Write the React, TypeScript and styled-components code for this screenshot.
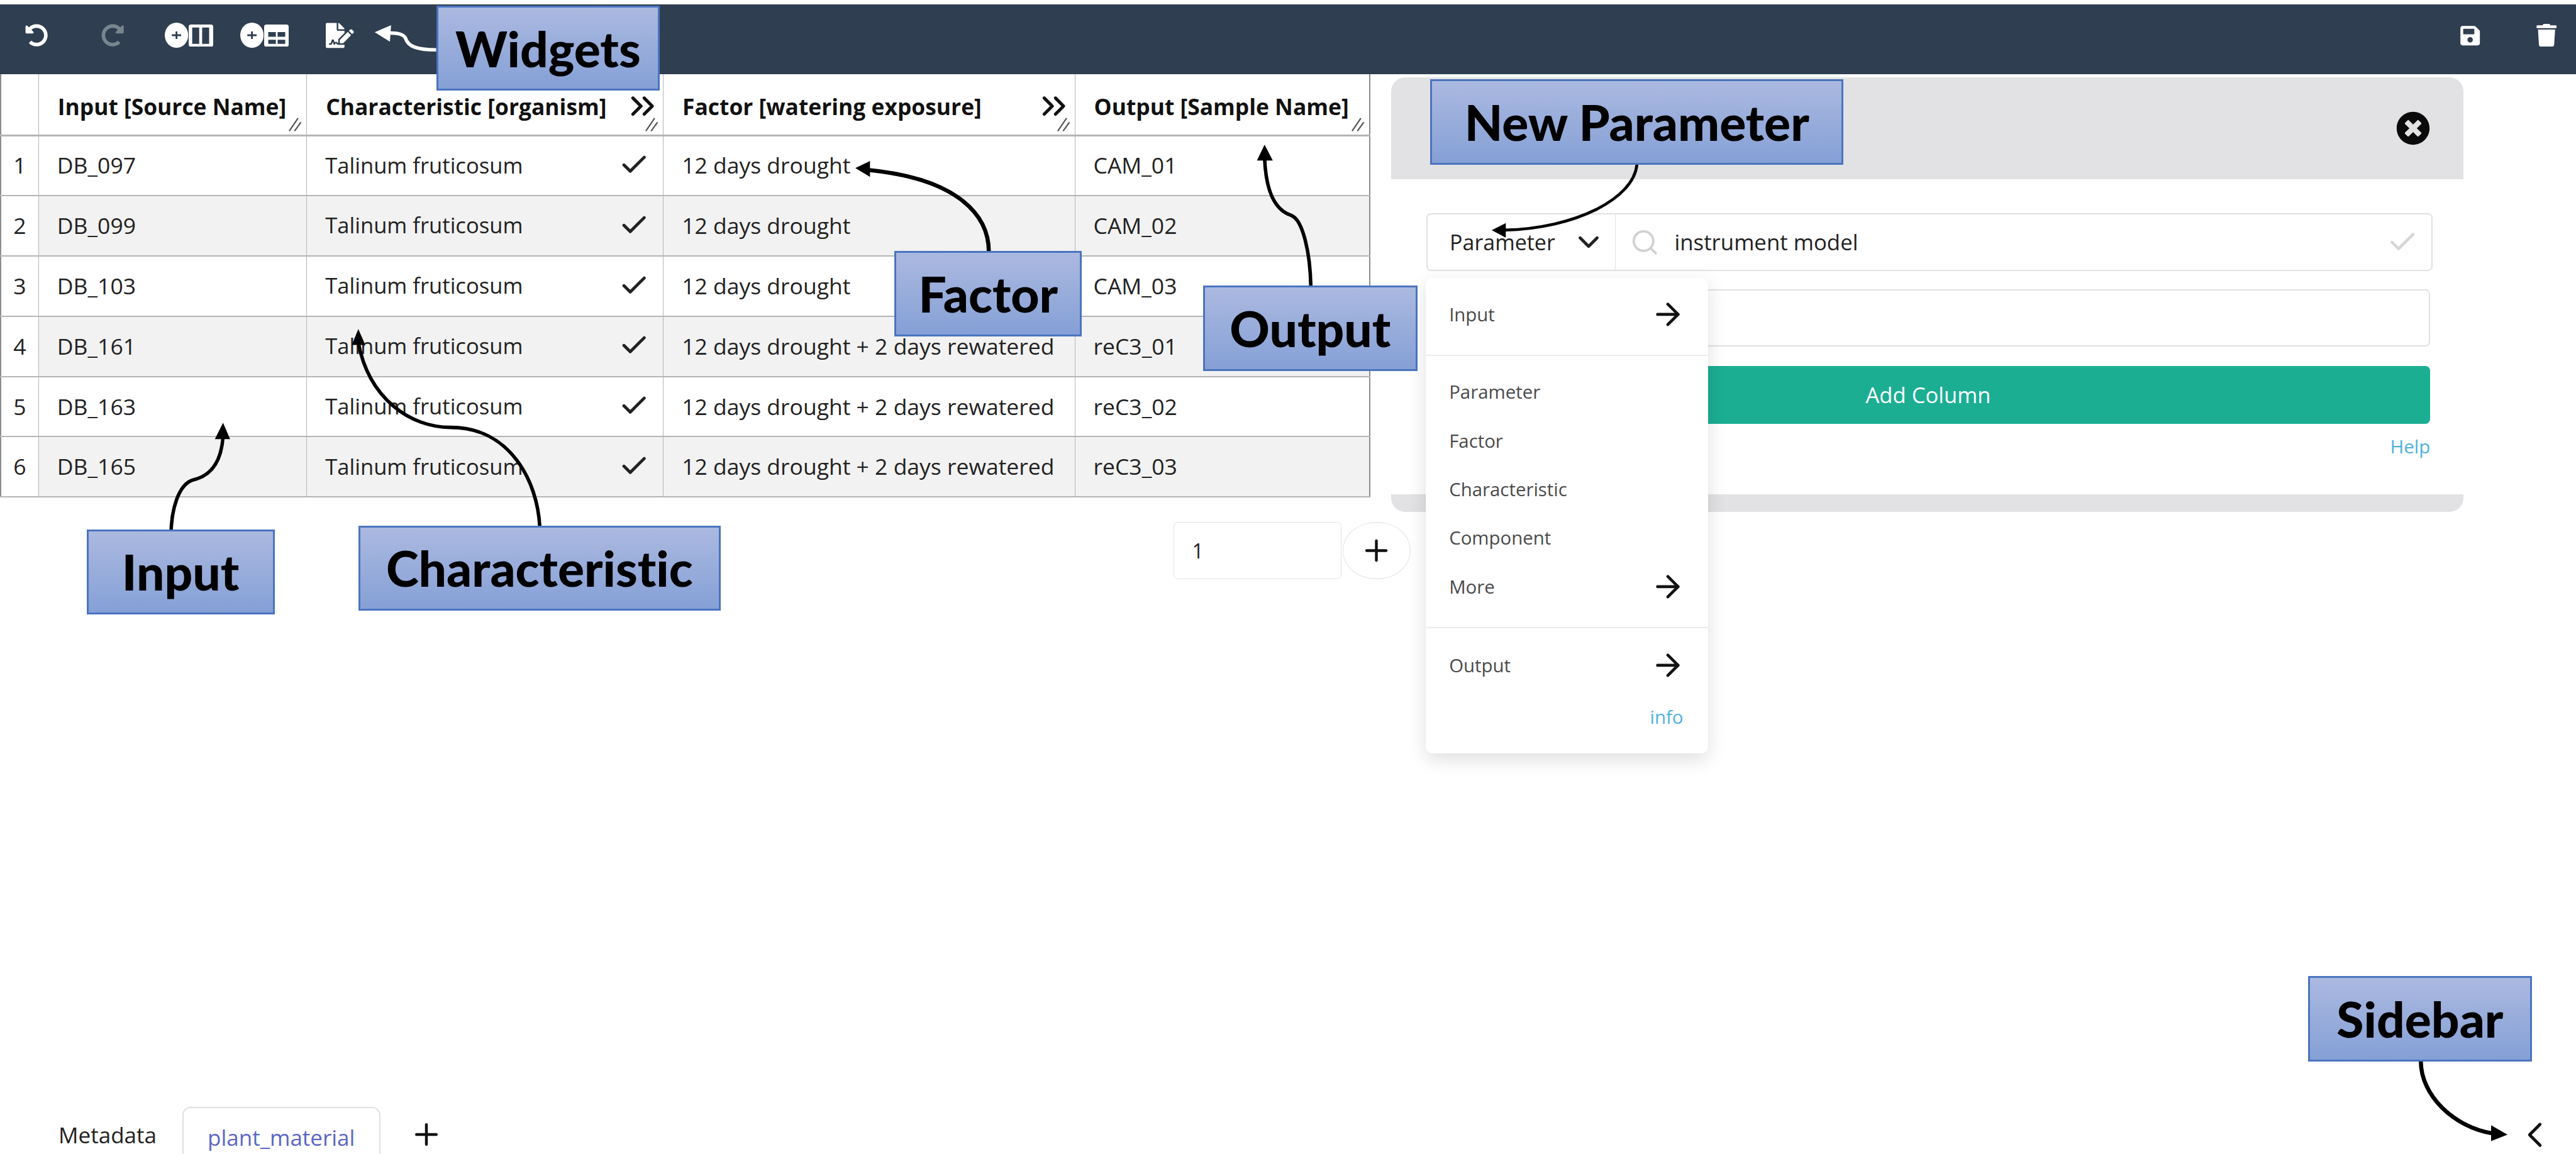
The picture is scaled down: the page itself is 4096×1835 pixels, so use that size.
import React from "react";
import styled, { createGlobalStyle } from "styled-components";
import { ArrowRight, Check, ChevronDown, ChevronLeft, ChevronsRight, Plus, Search } from "lucide-react";
import { FaFileSignature, FaRedoAlt, FaSave, FaTimesCircle, FaTrash, FaUndoAlt } from "react-icons/fa";

const K = 4096 / 4400;
const n = (v: number) => +(v * K).toFixed(2);
const u = (v: number) => `${n(v)}px`;

const Global = createGlobalStyle`
  html, body { margin: 0; padding: 0; background: #fff; overflow: hidden; }
  body { font-family: "Open Sans", "Noto Sans", sans-serif; color: #222; }
`;

const Page = styled.div`
  position: relative;
  width: 4096px;
  height: 1835px;
  padding-top: ${u(7)};
  box-sizing: border-box;
  display: flex;
  flex-direction: column;
  overflow: hidden;
`;

const Toolbar = styled.header`
  flex: none;
  height: ${u(120)};
  background: #2f3e50;
  box-sizing: border-box;
  padding: 0 ${u(31)} ${u(13)} ${u(43)};
  display: flex;
  align-items: center;
  justify-content: space-between;
  color: #fff;
`;
const ToolGroup = styled.div`
  display: flex;
  align-items: center;
`;
const ToolIcon = styled.span<{ $gap?: number; $muted?: boolean }>`
  display: inline-flex;
  align-items: center;
  gap: ${u(1)};
  margin-left: ${(p) => u(p.$gap ?? 0)};
  color: ${(p) => (p.$muted ? "#78858f" : "#fff")};
`;

const Main = styled.main`
  flex: 1;
  min-height: 0;
  display: flex;
`;
const TableColumn = styled.section`
  flex: none;
  width: ${u(2376)};
`;
const Grid = styled.table`
  width: ${u(2339)};
  table-layout: fixed;
  border-collapse: collapse;
  border: ${u(3)} solid #8d8d8d;
  border-top: 0;
  font-size: 35.5px;
`;
const HeadCell = styled.th<{ $w: number }>`
  position: relative;
  width: ${(p) => u(p.$w)};
  height: ${u(104)};
  box-sizing: border-box;
  padding: ${u(6)} 0 0 ${u(32)};
  border: ${u(2)} solid #b5b5b5;
  border-top: 0;
  border-bottom-width: ${u(4)};
  background: #fff;
  text-align: left;
  font-size: 35.4px;
  font-weight: 700;
  color: #111;
  white-space: nowrap;
`;
const Cell = styled.td<{ $shade?: boolean }>`
  position: relative;
  height: ${u(103)};
  box-sizing: border-box;
  padding: 0 0 ${u(2)} ${u(31)};
  border: ${u(2)} solid #b5b5b5;
  border-bottom-width: ${u(3)};
  background: ${(p) => (p.$shade ? "#f2f2f2" : "#fff")};
  color: #222;
  white-space: nowrap;
`;
const IndexCell = styled.td`
  height: ${u(103)};
  box-sizing: border-box;
  padding: 0 0 ${u(2)};
  border: ${u(2)} solid #b5b5b5;
  border-bottom-width: ${u(3)};
  text-align: center;
  color: #222;
`;
const CellRow = styled.div`
  display: flex;
  align-items: center;
  justify-content: space-between;
  padding-right: ${u(24)};
  font-size: 34.6px;
`;
const HeadRow = styled.div`
  display: flex;
  align-items: center;
  justify-content: space-between;
  padding-right: ${u(2)};
`;
const Grip = styled.svg`
  position: absolute;
  right: ${u(8)};
  bottom: ${u(4)};
  width: ${u(22)};
  height: ${u(24)};
`;
const AddRow = styled.div`
  display: flex;
  margin: ${u(42)} 0 0 ${u(2005)};
`;
const CountBox = styled.div`
  flex: none;
  width: ${u(286)};
  height: ${u(97)};
  box-sizing: border-box;
  padding-left: ${u(30)};
  display: flex;
  align-items: center;
  border: ${u(2)} solid #e3e3e3;
  border-radius: ${u(8)};
  font-size: 32px;
  color: #222;
`;
const RoundButton = styled.div`
  flex: none;
  width: ${u(117)};
  height: ${u(97)};
  margin-left: ${u(2)};
  box-sizing: border-box;
  display: flex;
  align-items: center;
  justify-content: center;
  border: ${u(2)} solid #e3e3e3;
  border-radius: 50%;
  background: #fff;
  color: #111;
`;

const Panel = styled.aside`
  flex: none;
  align-self: flex-start;
  width: ${u(1832)};
  margin-top: ${u(5)};
`;
const PanelHead = styled.div`
  height: ${u(174)};
  box-sizing: border-box;
  padding-right: ${u(57)};
  background: #e2e2e4;
  border-radius: ${u(24)} ${u(24)} 0 0;
  display: flex;
  align-items: center;
  justify-content: flex-end;
  color: #0a0a0a;
`;
const PanelBody = styled.div`
  padding: ${u(58)} ${u(57)} 0 ${u(60)};
  height: ${u(538)};
  box-sizing: border-box;
`;
const PanelFoot = styled.div`
  height: ${u(30)};
  background: #e2e2e4;
  border-radius: 0 0 ${u(24)} ${u(24)};
`;
const SearchRow = styled.div`
  position: relative;
  height: ${u(99)};
  margin-right: ${u(-4)};
  box-sizing: border-box;
  display: flex;
  border: ${u(3)} solid #e1e1e1;
  border-radius: ${u(8)};
  font-size: 34px;
  color: #222;
`;
const TypeSelect = styled.div`
  flex: none;
  width: ${u(322)};
  box-sizing: border-box;
  padding: 0 ${u(17)} 0 ${u(38)};
  border-right: ${u(2)} solid #e1e1e1;
  display: flex;
  align-items: center;
  justify-content: space-between;
`;
const SearchField = styled.div`
  flex: 1;
  padding: 0 ${u(22)} 0 ${u(24)};
  display: flex;
  align-items: center;
  gap: ${u(26)};
`;
const SearchText = styled.span`
  flex: 1;
  font-size: 34.8px;
`;
const TextBox = styled.div`
  height: ${u(98)};
  margin-top: ${u(31)};
  box-sizing: border-box;
  border: ${u(3)} solid #e1e1e1;
  border-radius: ${u(8)};
`;
const AddButton = styled.div`
  height: ${u(99)};
  margin-top: ${u(33)};
  display: flex;
  align-items: center;
  justify-content: center;
  background: #1bae93;
  border-radius: ${u(8)};
  color: #fff;
  font-size: 34.6px;
`;
const HelpLink = styled.div`
  margin-top: ${u(16)};
  text-align: right;
  font-size: 29.5px;
  color: #4fb0dc;
`;
const Menu = styled.div`
  position: absolute;
  z-index: 2;
  top: ${u(109)};
  left: ${u(-3)};
  width: ${u(482)};
  height: ${u(812)};
  background: #fff;
  border-radius: ${u(12)};
  box-shadow: 0 ${u(10)} ${u(32)} rgba(0, 0, 0, 0.13);
  font-size: 29.4px;
  color: #4a4a4a;
`;
const MenuSection = styled.div<{ $top: number; $bottom: number; $rule?: boolean }>`
  padding: ${(p) => u(p.$top)} 0 ${(p) => u(p.$bottom)};
  border-bottom: ${(p) => (p.$rule ? `${u(2.5)} solid #ececec` : "0")};
`;
const MenuItem = styled.div`
  height: ${u(83)};
  padding: 0 ${u(38)} 0 ${u(40)};
  display: flex;
  align-items: center;
  justify-content: space-between;
`;
const MenuInfo = styled.div`
  height: ${u(83)};
  box-sizing: border-box;
  padding: ${u(9)} ${u(42)} 0 0;
  display: flex;
  align-items: center;
  justify-content: flex-end;
  color: #4fb0dc;
`;

const Tabs = styled.nav`
  flex: none;
  height: ${u(81)};
  display: flex;
  padding: 0 ${u(34)} 0 ${u(100)};
  font-size: 35px;
  color: #222;
`;
const PlainTab = styled.div`
  display: flex;
  align-items: center;
  height: ${u(96)};
`;
const ActiveTab = styled.div`
  display: flex;
  align-items: center;
  box-sizing: border-box;
  height: ${u(105)};
  margin-left: ${u(44)};
  padding: 0 ${u(41)};
  border: ${u(3)} solid #e0e0e0;
  border-radius: ${u(14)} ${u(14)} 0 0;
  color: #5b67c4;
`;
const TabAdd = styled.div`
  display: flex;
  align-items: center;
  height: ${u(96)};
  margin-left: ${u(50)};
  color: #111;
`;
const TabSpacer = styled.div`
  flex: 1;
`;
const Collapse = styled.div`
  display: flex;
  align-items: center;
  height: ${u(96)};
  color: #111;
`;

const ArrowLayer = styled.svg`
  position: absolute;
  inset: 0;
  z-index: 3;
  width: 4096px;
  height: 1835px;
  pointer-events: none;
`;
const Callout = styled.div<{ $x: number; $y: number; $w: number; $h: number }>`
  position: absolute;
  z-index: 4;
  left: ${(p) => u(p.$x)};
  top: ${(p) => u(p.$y)};
  width: ${(p) => u(p.$w)};
  height: ${(p) => u(p.$h)};
  box-sizing: border-box;
  display: flex;
  align-items: center;
  justify-content: center;
  border: ${u(3.5)} solid #4a74bf;
  background: linear-gradient(180deg, #abb9e0 0%, #85a0d6 100%);
  font-family: Lato, "Open Sans", sans-serif;
  font-size: 78.5px;
  font-weight: 900;
  font-variant-ligatures: none;
  color: #000;
  white-space: nowrap;
`;

const rows = [
  ["DB_097", "12 days drought", "CAM_01"],
  ["DB_099", "12 days drought", "CAM_02"],
  ["DB_103", "12 days drought", "CAM_03"],
  ["DB_161", "12 days drought + 2 days rewatered", "reC3_01"],
  ["DB_163", "12 days drought + 2 days rewatered", "reC3_02"],
  ["DB_165", "12 days drought + 2 days rewatered", "reC3_03"],
];

const GripMark = () => (
  <Grip viewBox="0 0 22 24">
    <path d="M1 23 L16 1 M10 23 L21 8" stroke="#555" strokeWidth="2.4" fill="none" />
  </Grip>
);

const PlusDisc = () => (
  <svg width={n(40)} height={n(43)} viewBox="0 0 40 43">
    <ellipse cx="20" cy="21.5" rx="20" ry="21.5" fill="#fff" />
    <path d="M12 21.5 H28 M20 15 V28" stroke="#2f3e50" strokeWidth="3" />
  </svg>
);
const ColumnsGlyph = () => (
  <svg width={n(42)} height={n(38)} viewBox="0 0 42 38">
    <path
      fillRule="evenodd"
      fill="#fff"
      d="M4 0 H38 A4 4 0 0 1 42 4 V34 A4 4 0 0 1 38 38 H4 A4 4 0 0 1 0 34 V4 A4 4 0 0 1 4 0 Z M6 5 V33 H18 V5 Z M23 5 V33 H35 V5 Z"
    />
  </svg>
);
const GridGlyph = () => (
  <svg width={n(42)} height={n(38)} viewBox="0 0 42 38">
    <path
      fillRule="evenodd"
      fill="#fff"
      d="M4 0 H38 A4 4 0 0 1 42 4 V34 A4 4 0 0 1 38 38 H4 A4 4 0 0 1 0 34 V4 A4 4 0 0 1 4 0 Z M7 13 V21 H20 V13 Z M23 13 V21 H36 V13 Z M7 26 V33 H20 V26 Z M23 26 V33 H36 V26 Z"
    />
  </svg>
);

const callouts = [
  { text: "Widgets", x: 745, y: 10, w: 382, h: 145 },
  { text: "New Parameter", x: 2443, y: 135, w: 706, h: 146 },
  { text: "Factor", x: 1528, y: 429, w: 320, h: 146 },
  { text: "Output", x: 2055, y: 488, w: 366, h: 146 },
  { text: "Input", x: 148, y: 904, w: 321, h: 146 },
  { text: "Characteristic", x: 612, y: 898, w: 619, h: 145 },
  { text: "Sidebar", x: 3942, y: 1667, w: 383, h: 146 },
];

const Arrows = () => (
  <ArrowLayer viewBox="0 0 4400 1971">
    <g fill="none" stroke="#000" strokeWidth="6">
      <path d="M2239 490 C2238 430 2225 376 2206 368 C2180 360 2162 330 2160 268" />
      <path d="M292 917 C292 870 305 825 332 819 C360 812 378 790 381 745" />
      <path d="M922 900 C918 820 870 730 770 730 C700 730 630 680 612 585" />
      <path d="M2796 281 C2790 340 2690 390 2570 393" strokeWidth="5" />
      <path d="M4135 1813 C4135 1870 4190 1925 4258 1936" strokeWidth="7" />
      <path d="M1689 430 C1689 370 1640 305 1480 290" strokeWidth="7" />
      <path d="M745 85 C710 85 697 78 693 66 C690 58 680 56 660 56" stroke="#fff" strokeWidth="6" />
    </g>
    <path d="M2160 247 L2147 274 L2174 274 Z" />
    <path d="M381 722 L367 750 L393 750 Z" />
    <path d="M612 562 L601 589 L624 589 Z" />
    <path d="M2548 393 L2572 381 L2572 406 Z" />
    <path d="M4283 1938 L4255 1922 L4255 1949 Z" />
    <path d="M1461 287 L1486 275 L1486 302 Z" />
    <path d="M640 55 L668 43 L666 71 Z" fill="#fff" />
  </ArrowLayer>
);

export default function App() {
  return (
    <Page>
      <Global />
      <Toolbar>
        <ToolGroup>
          <ToolIcon><FaUndoAlt size={n(39)} /></ToolIcon>
          <ToolIcon $gap={91} $muted><FaRedoAlt size={n(39)} /></ToolIcon>
          <ToolIcon $gap={69}><PlusDisc /><ColumnsGlyph /></ToolIcon>
          <ToolIcon $gap={46}><PlusDisc /><GridGlyph /></ToolIcon>
          <ToolIcon $gap={64}><FaFileSignature size={n(48)} /></ToolIcon>
        </ToolGroup>
        <ToolGroup>
          <ToolIcon><FaSave size={n(38)} /></ToolIcon>
          <ToolIcon $gap={92}><FaTrash size={n(39)} /></ToolIcon>
        </ToolGroup>
      </Toolbar>
      <Main>
        <TableColumn>
          <Grid>
            <thead>
              <tr>
                <HeadCell $w={65} />
                <HeadCell $w={458}>
                  Input [Source Name]
                  <GripMark />
                </HeadCell>
                <HeadCell $w={609}>
                  <HeadRow>Characteristic [organism]<ChevronsRight size={n(66)} strokeWidth={2} /></HeadRow>
                  <GripMark />
                </HeadCell>
                <HeadCell $w={703}>
                  <HeadRow>Factor [watering exposure]<ChevronsRight size={n(66)} strokeWidth={2} /></HeadRow>
                  <GripMark />
                </HeadCell>
                <HeadCell $w={504}>
                  Output [Sample Name]
                  <GripMark />
                </HeadCell>
              </tr>
            </thead>
            <tbody>
              {rows.map((r, i) => (
                <tr key={r[0]}>
                  <IndexCell>{i + 1}</IndexCell>
                  <Cell $shade={i % 2 === 1}>{r[0]}</Cell>
                  <Cell $shade={i % 2 === 1}>
                    <CellRow>Talinum fruticosum<Check size={n(52)} strokeWidth={2.4} /></CellRow>
                  </Cell>
                  <Cell $shade={i % 2 === 1}>{r[1]}</Cell>
                  <Cell $shade={i % 2 === 1}>{r[2]}</Cell>
                </tr>
              ))}
            </tbody>
          </Grid>
          <AddRow>
            <CountBox>1</CountBox>
            <RoundButton><Plus size={n(57)} strokeWidth={2} /></RoundButton>
          </AddRow>
        </TableColumn>
        <Panel>
          <PanelHead><FaTimesCircle size={n(58)} /></PanelHead>
          <PanelBody>
            <SearchRow>
              <TypeSelect>Parameter<ChevronDown size={n(58)} strokeWidth={2.1} /></TypeSelect>
              <SearchField>
                <Search size={n(50)} color="#d2d2d2" strokeWidth={2} />
                <SearchText>instrument model</SearchText>
                <Check size={n(54)} color="#d6d6d6" strokeWidth={2.2} />
              </SearchField>
              <Menu>
                <MenuSection $top={20} $bottom={28} $rule>
                  <MenuItem>Input<ArrowRight size={n(60)} color="#111" strokeWidth={2} /></MenuItem>
                </MenuSection>
                <MenuSection $top={20} $bottom={28} $rule>
                  <MenuItem>Parameter</MenuItem>
                  <MenuItem>Factor</MenuItem>
                  <MenuItem>Characteristic</MenuItem>
                  <MenuItem>Component</MenuItem>
                  <MenuItem>More<ArrowRight size={n(60)} color="#111" strokeWidth={2} /></MenuItem>
                </MenuSection>
                <MenuSection $top={22} $bottom={0}>
                  <MenuItem>Output<ArrowRight size={n(60)} color="#111" strokeWidth={2} /></MenuItem>
                  <MenuInfo>info</MenuInfo>
                </MenuSection>
              </Menu>
            </SearchRow>
            <TextBox />
            <AddButton>Add Column</AddButton>
            <HelpLink>Help</HelpLink>
          </PanelBody>
          <PanelFoot />
        </Panel>
      </Main>
      <Tabs>
        <PlainTab>Metadata</PlainTab>
        <ActiveTab>plant_material</ActiveTab>
        <TabAdd><Plus size={n(58)} strokeWidth={2} /></TabAdd>
        <TabSpacer />
        <Collapse><ChevronLeft size={n(72)} strokeWidth={1.7} /></Collapse>
      </Tabs>
      <Arrows />
      {callouts.map((c) => (
        <Callout key={c.text} $x={c.x} $y={c.y} $w={c.w} $h={c.h}>{c.text}</Callout>
      ))}
    </Page>
  );
}
